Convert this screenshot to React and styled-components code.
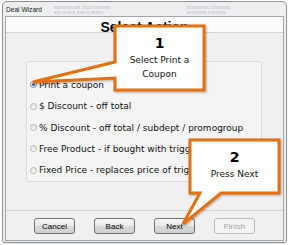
import React from 'react';
import styled, { createGlobalStyle } from 'styled-components';

const GlobalStyle = createGlobalStyle`
	html, body {
		margin: 0;
		padding: 0;
		background: #ffffff;
		overflow: hidden;
	}
`;

const options = [
	{ label: 'Print a coupon', checked: true },
	{ label: '$ Discount - off total' },
	{ label: '% Discount - off total / subdept / promogroup' },
	{ label: 'Free Product - if bought with trigger item' },
	{ label: 'Fixed Price - replaces price of trigger item' },
];

const buttons = [
	{ label: 'Cancel' },
	{ label: 'Back' },
	{ label: 'Next' },
	{ label: 'Finish', disabled: true },
];

const callouts = [
	{
		points: '115,26 204,26 204,90 115,90 115,78 33,82 115,62',
		left: 115,
		top: 33,
		width: 89,
		number: '1',
		lines: ['Select Print a', 'Coupon'],
	},
	{
		points: '190,140 279,140 279,193 221,193 183,224 200,193 190,193',
		left: 190,
		top: 147,
		width: 89,
		number: '2',
		lines: ['Press Next'],
	},
];

export default function App() {
	return (
		<Page>
			<GlobalStyle />
			<Window>
				<TitleBar>
					<TitleText>Deal Wizard</TitleText>
					<Blurred $left={12}>
						<span>xxxxxxx xxx xxxx xxxxxxx</span>
						<span>xxx xxxxx xxxxx xxxxx</span>
					</Blurred>
					<Blurred $left={76}>
						<span>xxxxxxxxx xxxxxxxx</span>
						<span>xxxxxxxx xxxxxxx</span>
					</Blurred>
				</TitleBar>
				<Client>
					<Header>Select Action</Header>
					<Body>
						<GroupBox>
							{options.map((item) => (
								<OptionRow key={item.label}>
									<Radio $checked={item.checked} />
									<OptionLabel>{item.label}</OptionLabel>
								</OptionRow>
							))}
						</GroupBox>
					</Body>
					<Footer>
						{buttons.map((b) => (
							<Button key={b.label} $disabled={b.disabled}>
								{b.label}
							</Button>
						))}
					</Footer>
				</Client>
			</Window>

			<Overlay width="289" height="245" viewBox="0 0 289 245">
				{callouts.map((c) => (
					<polygon
						key={c.number}
						points={c.points}
						fill="#ffffff"
						stroke="#e5700f"
						strokeWidth="3"
						strokeLinejoin="miter"
					/>
				))}
			</Overlay>
			{callouts.map((c) => (
				<CalloutText key={c.number} style={{ left: c.left, top: c.top, width: c.width }}>
					<CalloutNumber>{c.number}</CalloutNumber>
					{c.lines.map((line) => (
						<CalloutLine key={line}>{line}</CalloutLine>
					))}
				</CalloutText>
			))}
		</Page>
	);
}

const Page = styled.div`
	position: relative;
	width: 289px;
	height: 245px;
	padding: 1px 3px 0 2px;
	box-sizing: border-box;
`;

const Window = styled.div`
	display: flex;
	flex-direction: column;
	width: 285px;
	height: 242px;
	box-sizing: border-box;
	border: 1px solid #8f9194;
	border-radius: 5px 5px 3px 3px;
	background: #eceef0;
	box-shadow: 0 1px 1px rgba(0, 0, 0, 0.12);
`;

const TitleBar = styled.div`
	display: flex;
	align-items: center;
	height: 14px;
	padding-left: 3px;
	flex-shrink: 0;
`;

const TitleText = styled.span`
	font-family: 'Liberation Sans', Arial, sans-serif;
	font-size: 6.6px;
	color: #1a1a1a;
	white-space: nowrap;
`;

const Blurred = styled.span`
	display: flex;
	flex-direction: column;
	margin-left: ${(p) => p.$left}px;
	margin-top: 2px;
	font-family: 'Liberation Sans', Arial, sans-serif;
	font-size: 5px;
	line-height: 5px;
	color: #b8babd;
	filter: blur(0.7px);
	white-space: nowrap;
`;

const Client = styled.div`
	display: flex;
	flex-direction: column;
	flex: 1;
	margin: 0 2px 1px 2px;
	border: 1px solid #a3a5a8;
	background: #f0f0f0;
`;

const Header = styled.div`
	height: 16px;
	box-sizing: border-box;
	padding-top: 2px;
	line-height: 16px;
	text-align: center;
	background: #fbfbfb;
	border-bottom: 1px solid #d3d3d3;
	font-family: 'Liberation Sans', Arial, sans-serif;
	font-weight: 700;
	font-size: 14px;
	color: #000;
	flex-shrink: 0;
`;

const Body = styled.div`
	flex: 1;
	padding: 28px 20px 0 20px;
`;

const GroupBox = styled.div`
	display: flex;
	flex-direction: column;
	width: 236px;
	height: 121px;
	box-sizing: border-box;
	padding: 12px 3px 0 3px;
	border: 1px solid #dcdcdc;
	border-radius: 2px;
	background: #f4f4f4;
	overflow: hidden;
`;

const OptionRow = styled.div`
	display: flex;
	align-items: center;
	gap: 2px;
	height: 21.5px;
	white-space: nowrap;
`;

const Radio = styled.span`
	position: relative;
	flex-shrink: 0;
	width: 7px;
	height: 7px;
	box-sizing: border-box;
	border-radius: 50%;
	border: 1px solid ${(p) => (p.$checked ? '#7d8fa8' : '#b4b4b4')};
	background: linear-gradient(#e4e4e4, #f8f8f8);

	&::after {
		content: '';
		display: ${(p) => (p.$checked ? 'block' : 'none')};
		position: absolute;
		left: 1px;
		top: 1px;
		width: 3px;
		height: 3px;
		border-radius: 50%;
		background: #2b5ca8;
	}
`;

const OptionLabel = styled.span`
	font-family: 'DejaVu Sans', Verdana, sans-serif;
	font-size: 9px;
	color: #111;
`;

const Footer = styled.div`
	display: flex;
	gap: 19px;
	height: 30px;
	box-sizing: border-box;
	padding: 7px 0 0 28px;
	border-top: 1px solid #d5d5d5;
	flex-shrink: 0;
`;

const Button = styled.div`
	display: flex;
	align-items: center;
	justify-content: center;
	width: 41px;
	height: 16px;
	box-sizing: border-box;
	border: 1px solid ${(p) => (p.$disabled ? '#b9bcbf' : '#707070')};
	border-radius: 3px;
	background: ${(p) =>
		p.$disabled ? '#f4f4f4' : 'linear-gradient(#f5f5f5, #e9e9e9 50%, #d9d9d9 51%, #d0d0d0)'};
	font-family: 'Liberation Sans', Arial, sans-serif;
	font-size: 8px;
	color: ${(p) => (p.$disabled ? '#a0a0a0' : '#000')};
`;

const Overlay = styled.svg`
	position: absolute;
	left: 0;
	top: 0;
	pointer-events: none;
	filter: drop-shadow(1px 1px 1px rgba(0, 0, 0, 0.3));
`;

const CalloutText = styled.div`
	position: absolute;
	display: flex;
	flex-direction: column;
	align-items: center;
	color: #111;
	font-family: 'DejaVu Sans', Verdana, sans-serif;
`;

const CalloutNumber = styled.div`
	font-size: 14px;
	font-weight: 700;
	line-height: 20px;
	color: #000;
`;

const CalloutLine = styled.div`
	font-size: 9px;
	line-height: 14px;
`;
